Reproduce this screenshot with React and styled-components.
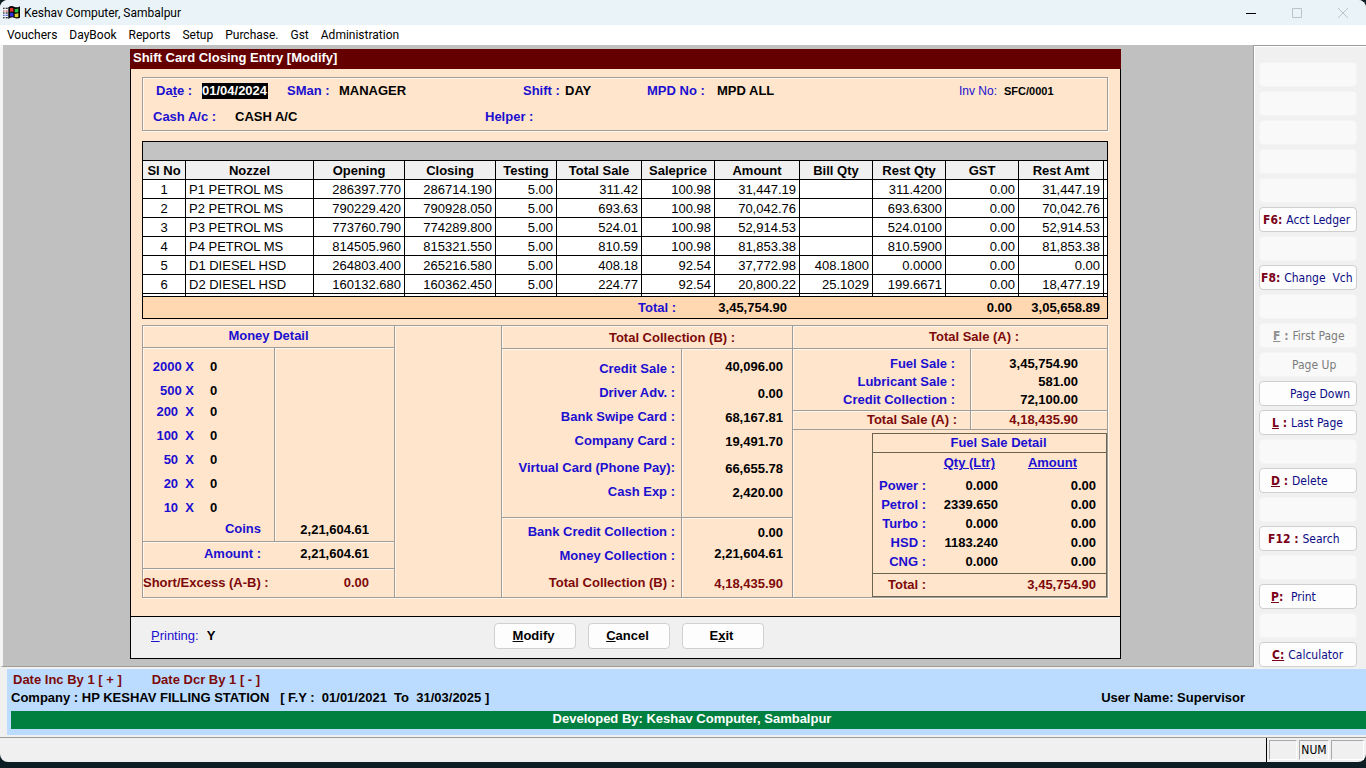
import React, { useState } from "react";
import styled, { createGlobalStyle, css } from "styled-components";

const GlobalStyle = createGlobalStyle`
  * {
    box-sizing: border-box;
  }
  :root {
    --blue: #1b0fd0;
    --maroon: #7d0a0a;
    --peach: #ffe5cc;
    --line: #a09c98;
    --face: #f0f0f0;
    --arial: "Liberation Sans", Arial, sans-serif;
    --segoe: Roboto, "Segoe UI", sans-serif;
    --tahoma: "DejaVu Sans Condensed", Tahoma, sans-serif;
  }
  body {
    margin: 0;
    background: #0d1f24;
    font: bold 13px/16px var(--arial);
    color: #000;
  }
`;

const Window = styled.div`
  display: flex;
  flex-direction: column;
  min-height: calc(100vh - 6px);
  border-radius: 8px;
  overflow: hidden;
  background: var(--face);
`;

const TitleBar = styled.header`
  display: flex;
  align-items: center;
  height: 25px;
  padding-left: 3px;
  background: #eaf4f8;
  font: 12px/16px var(--segoe);
  svg {
    flex: none;
  }
  h1 {
    flex: 1;
    margin: 0 0 0 4px;
    font: inherit;
  }
`;

const CaptionButton = styled.button`
  display: flex;
  align-items: center;
  justify-content: center;
  width: 46px;
  height: 25px;
  padding: 0;
  border: none;
  background: none;
  color: ${({ disabled }) => (disabled ? "#b9c4c4" : "#000")};
`;

const MenuBar = styled.nav`
  display: flex;
  align-items: center;
  gap: 12px;
  height: 20px;
  padding-left: 7px;
  background: #fff;
  font: 12px/16px var(--segoe);
  button {
    padding: 0;
    border: none;
    background: none;
    font: inherit;
    color: inherit;
  }
`;

const Workspace = styled.div`
  display: flex;
  flex: 1;
  border-left: 3px solid #f4f4f4;
  border-bottom: 1px solid var(--line);
  background: #c0c0c0;
`;

const Desk = styled.main`
  flex: 1;
  min-width: 0;
  padding: 4px 132px 7px 127px;
`;

const Form = styled.form`
  display: flex;
  flex-direction: column;
  border: 1px solid #000;
  background: var(--peach);
`;

const FormTitle = styled.h2`
  height: 20px;
  margin: -1px -1px 0;
  padding: 1px 3px;
  background: #640000;
  color: #fff;
  font: inherit;
`;

const FormBody = styled.div`
  padding: 8px 12px 18px 11px;
`;

const etched = css`
  border: 1px solid var(--line);
  box-shadow: 1px 1px 0 #fff6ee, inset 1px 1px 0 #fff6ee;
`;

const EntryHead = styled.section`
  ${etched}
  height: 54px;
  padding: 5px 0 0 10px;
`;

const EntryRow = styled.div`
  display: grid;
  grid-template-columns: ${({ $cols }) => $cols};
  align-items: center;
  height: 16px;
  margin-bottom: 10px;
  padding-left: ${({ $indent }) => $indent || 0}px;
`;

const Field = styled.label`
  display: flex;
  align-items: center;
  color: var(--blue);
  white-space: nowrap;
  span {
    flex: none;
    width: ${({ $label }) => $label}px;
  }
  font-weight: ${({ $plain }) => ($plain ? "normal" : "bold")};
  font-size: ${({ $plain }) => ($plain ? 12 : 13)}px;
`;

const FieldInput = styled.input`
  width: ${({ $width }) => $width || 120}px;
  min-width: 0;
  height: 16px;
  padding: 0;
  border: none;
  outline: none;
  background: ${({ $selected }) => ($selected ? "#000" : "transparent")};
  color: ${({ $selected }) => ($selected ? "#fff" : "#000")};
  font: bold ${({ $small }) => ($small ? 11 : 13)}px/16px var(--arial);
`;

const GridBox = styled.section`
  margin-top: 10px;
  padding-top: 18px;
  border: 1px solid #000;
  background: #c3c3c3;
`;

const NozzleTable = styled.table`
  width: 100%;
  table-layout: fixed;
  border-collapse: separate;
  border-spacing: 0;
  border-top: 1px solid #000;
  background: #fff;
  th,
  td {
    height: 19px;
    padding: 1px 3px 0;
    border-right: 1px solid #000;
    border-bottom: 1px solid #000;
    line-height: 16px;
    white-space: nowrap;
  }
  th {
    padding: 1px 0 0;
    background: var(--face);
  }
  tbody td {
    font-weight: normal;
    text-align: right;
  }
  tbody td:nth-child(1) {
    text-align: center;
  }
  tbody td:nth-child(2) {
    text-align: left;
  }
  th:last-child,
  td:last-child {
    padding: 0;
    border-right: none;
  }
  tbody tr:last-child td {
    height: 3px;
    padding: 0;
    line-height: 0;
  }
  tfoot td {
    height: 21px;
    padding: 0;
    border: none;
    background: #ffd8b2;
    text-align: right;
  }
`;

const TotalLabel = styled.td`
  && {
    padding-right: 39px;
    color: var(--blue);
  }
`;

const TotalAmount = styled.td`
  && {
    padding-right: ${({ $right }) => $right}px;
  }
`;

const Panels = styled.section`
  ${etched}
  display: grid;
  grid-template-columns:
    minmax(0, 252fr) minmax(0, 107fr)
    minmax(0, 291fr) minmax(0, 314fr);
  margin-top: 6px;
  > div {
    display: flex;
    flex-direction: column;
    border-right: 1px solid var(--line);
    box-shadow: 1px 0 0 #fff6ee;
  }
  > div:last-child {
    border-right: none;
    box-shadow: none;
  }
`;

const PanelTitle = styled.h3`
  height: ${({ $height }) => $height}px;
  margin: 0;
  padding-top: ${({ $top }) => $top || 3}px;
  padding-left: ${({ $shift }) => $shift || 0}px;
  border-bottom: 1px solid ${({ $line }) => $line || "var(--line)"};
  color: ${({ $color }) => $color};
  font: inherit;
  text-align: center;
`;

/* two columns split by a rule, rows placed by track heights */
const Split = styled.div`
  display: grid;
  grid-template-columns: ${({ $cols }) => $cols};
  height: ${({ $height }) => $height}px;
  border-bottom: ${({ $last }) => ($last ? "none" : "1px solid var(--line)")};
  box-shadow: inset 0 1px 0 #fff6ee;
  color: ${({ $tone }) => $tone || "#000"};
`;

const Side = styled.div`
  display: grid;
  grid-template-rows: ${({ $rows }) => $rows};
  align-content: start;
  padding: ${({ $top }) => $top}px ${({ $right }) => $right}px 0 0;
  border-right: ${({ $rule }) => ($rule ? "1px solid var(--line)" : "none")};
  box-shadow: ${({ $rule }) => ($rule ? "1px 0 0 #fff6ee" : "none")};
  color: ${({ $color }) => $color || "inherit"};
  text-align: right;
  white-space: pre;
`;

const Maroon = styled.span`
  color: var(--maroon);
`;

const Note = styled.div`
  display: grid;
  grid-template-columns: 51px 1fr;
  column-gap: 16px;
  text-align: right;
  span:last-child {
    color: #000;
    text-align: left;
  }
`;

const FuelBox = styled.div`
  flex: 1;
  margin: 3px 0 0 79px;
  border: 1px solid #6b6450;
`;

const FuelTable = styled.table`
  width: 100%;
  table-layout: fixed;
  border-collapse: separate;
  border-spacing: 0;
  th,
  td {
    height: 19px;
    padding: 0;
    vertical-align: top;
    text-align: right;
    white-space: nowrap;
  }
  thead th {
    height: 25px;
    padding-top: 2px;
    color: var(--blue);
    text-decoration: underline;
  }
  tbody th {
    color: var(--blue);
  }
  td:last-child {
    padding-right: 10px;
  }
  thead th:nth-child(2) {
    padding-right: 3px;
  }
  thead th:last-child {
    padding-right: 29px;
  }
  tfoot th,
  tfoot td {
    height: 22px;
    padding-top: 3px;
    border-top: 1px solid #6b6450;
    color: var(--maroon);
  }
`;

const FormFoot = styled.footer`
  display: grid;
  grid-template-columns: 1fr auto 1fr;
  align-items: center;
  height: 42px;
  padding: 0 0 3px 6px;
  border-top: 1px solid #000;
  background: var(--face);
  label {
    padding-left: 14px;
    color: var(--blue);
    font-weight: normal;
  }
  input {
    margin-left: 8px;
  }
`;

const Actions = styled.div`
  display: flex;
  gap: 12px;
`;

const ActionButton = styled.button`
  width: 82px;
  height: 26px;
  padding: 0 2px 0 0;
  border: 1px solid #d0d0d0;
  border-radius: 4px;
  background: #fdfdfd;
  color: #000;
  font: inherit;
`;

const SideBar = styled.aside`
  display: flex;
  flex-direction: column;
  gap: 4px;
  width: 113px;
  margin-bottom: -1px;
  padding: 16px 9px 0 5px;
  border-top: 1px solid var(--line);
  border-left: 1px solid var(--line);
  box-shadow: inset 1px 1px 0 #fff;
  background: var(--face);
`;

const SideButton = styled.button`
  display: flex;
  align-items: center;
  gap: 4px;
  height: 25px;
  padding: 0 0 0 ${({ $indent }) => $indent || 0}px;
  border: 1px solid ${({ disabled }) => (disabled ? "#f4f4f4" : "#cfcfcf")};
  border-radius: 4px;
  background: ${({ disabled }) => (disabled ? "#f9f9f9" : "#fdfdfd")};
  color: ${({ disabled }) => (disabled ? "#7c7c7c" : "#0b0b85")};
  font: 12px/16px var(--tahoma);
  white-space: pre;
  b {
    color: ${({ disabled }) => (disabled ? "#8f8f8f" : "#7a0018")};
  }
`;

const InfoBand = styled.section`
  display: flex;
  flex-direction: column;
  margin-top: 2px;
  margin-left: 7px;
  padding: 3px 0 6px 4px;
  background: #bbdcff;
`;

const InfoLine = styled.div`
  display: flex;
  justify-content: space-between;
  height: 18px;
  padding-right: 121px;
  color: ${({ $color }) => $color || "#000"};
  white-space: pre;
`;

const Shortcuts = styled.div`
  display: flex;
  gap: 30px;
  padding-left: 2px;
`;

const Credit = styled.div`
  height: 18px;
  margin-top: 3px;
  padding-left: 7px;
  background: #008040;
  color: #fff;
  text-align: center;
`;

const StatusBar = styled.footer`
  display: flex;
  gap: 2px;
  height: 25px;
  margin-top: 2px;
  padding-right: 2px;
  border-top: 1px solid var(--line);
`;

const StatusText = styled.div`
  flex: 1;
  border-right: 1px solid #000;
`;

const StatusCell = styled.div`
  width: ${({ $width }) => $width}px;
  margin: 2px 0;
  border: 1px solid;
  border-color: #a8a8a8 #fff #fff #a8a8a8;
  font: 12px/18px var(--tahoma);
  text-align: center;
`;

const columns = [
  ["Sl No", 43],
  ["Nozzel"],
  ["Opening", 91],
  ["Closing", 91],
  ["Testing", 61],
  ["Total Sale", 85],
  ["Saleprice", 73],
  ["Amount", 85],
  ["Bill Qty", 73],
  ["Rest Qty", 73],
  ["GST", 73],
  ["Rest Amt", 85],
  ["", 3],
];

const nozzles = [
  ["P1 PETROL MS", "286397.770", "286714.190", "5.00", "311.42", "100.98", "31,447.19", "", "311.4200", "0.00", "31,447.19"],
  ["P2 PETROL MS", "790229.420", "790928.050", "5.00", "693.63", "100.98", "70,042.76", "", "693.6300", "0.00", "70,042.76"],
  ["P3 PETROL MS", "773760.790", "774289.800", "5.00", "524.01", "100.98", "52,914.53", "", "524.0100", "0.00", "52,914.53"],
  ["P4 PETROL MS", "814505.960", "815321.550", "5.00", "810.59", "100.98", "81,853.38", "", "810.5900", "0.00", "81,853.38"],
  ["D1 DIESEL HSD", "264803.400", "265216.580", "5.00", "408.18", "92.54", "37,772.98", "408.1800", "0.0000", "0.00", "0.00"],
  ["D2 DIESEL HSD", "160132.680", "160362.450", "5.00", "224.77", "92.54", "20,800.22", "25.1029", "199.6671", "0.00", "18,477.19"],
];

const notes = ["2000 X", "500 X", "200  X", "100  X", "50  X", "20  X", "10  X"];

const collection = [
  ["Credit Sale :", "40,096.00"],
  ["Driver Adv. :", "0.00"],
  ["Bank Swipe Card :", "68,167.81"],
  ["Company Card :", "19,491.70"],
  ["Virtual Card (Phone Pay):", "66,655.78"],
  ["Cash Exp :", "2,420.00"],
];

const sales = [
  ["Fuel Sale :", "3,45,754.90"],
  ["Lubricant Sale :", "581.00"],
  ["Credit Collection :", "72,100.00"],
];

const fuels = [
  ["Power :", "0.000"],
  ["Petrol :", "2339.650"],
  ["Turbo :", "0.000"],
  ["HSD :", "1183.240"],
  ["CNG :", "0.000"],
];

const blank = { disabled: true };
const sideButtons = [
  blank,
  blank,
  blank,
  blank,
  blank,
  { hot: "F6:", text: "Acct Ledger", indent: 3 },
  blank,
  { hot: "F8:", text: "Change  Vch", indent: 1 },
  blank,
  { hot: <><u>F</u> :</>, text: "First Page", indent: 13, disabled: true },
  { text: "Page Up", indent: 32, disabled: true },
  { text: "Page Down", indent: 30 },
  { hot: <><u>L</u> :</>, text: "Last Page", indent: 12 },
  blank,
  { hot: <><u>D</u> :</>, text: "Delete", indent: 11 },
  blank,
  { hot: "F12 :", text: "Search", indent: 8 },
  blank,
  { hot: <><u>P</u>: </>, text: "Print", indent: 11 },
  blank,
  { hot: <u>C:</u>, text: "Calculator", indent: 12 },
];

const collectionCols = "minmax(0, 180fr) minmax(0, 110fr)";
const saleCols = "minmax(0, 178fr) minmax(0, 136fr)";
const moneyCols = "minmax(0, 132fr) minmax(0, 119fr)";

function AppIcon() {
  return (
    <svg width="17" height="15" viewBox="0 0 16 14" aria-hidden="true">
      <path d="M5 2 Q8 0 10.500 1.500 T16 1 V12 Q13 13.500 10.500 12 T5 13Z" fill="#000" />
      <path d="M6.500 3 Q8 2 9.800 3 V6.500 Q8 5.500 6.500 6.500Z" fill="#e03030" />
      <path d="M11 3.500 Q13 4 14.500 3 V6.500 Q13 7.500 11 6.800Z" fill="#30c040" />
      <path d="M6.500 7.500 Q8 6.500 9.800 7.500 V11 Q8 10 6.500 11Z" fill="#3030e0" />
      <path d="M11 8 Q13 8.500 14.500 7.500 V11 Q13 12 11 11.200Z" fill="#e0d030" />
      <path d="M0 3h1.500M2.500 3h2M0 12h1.500M2.500 12h2" stroke="#000" />
      <path d="M0 5.500h1.500M2.500 5.500h2" stroke="#d03030" />
      <path d="M0 9.500h1.500M2.500 9.500h2" stroke="#3030d0" />
      <path d="M0 7.500h1.500M2.500 7.500h2" stroke="#000" />
    </svg>
  );
}

function Caption({ label, d, disabled }) {
  return (
    <CaptionButton type="button" aria-label={label} disabled={disabled}>
      <svg width="12" height="12" viewBox="0 0 12 12" fill="none" stroke="currentColor">
        <path d={d} />
      </svg>
    </CaptionButton>
  );
}

function EntryField({ label, value, labelWidth, plain, ...rest }) {
  const [text, setText] = useState(value);
  return (
    <Field $label={labelWidth} $plain={plain}>
      <span>{label}</span>
      <FieldInput value={text} onChange={(e) => setText(e.target.value)} {...rest} />
    </Field>
  );
}

function NozzleGrid() {
  return (
    <GridBox>
      <NozzleTable>
        <colgroup>
          {columns.map(([name, width]) => (
            <col key={name} width={width} />
          ))}
        </colgroup>
        <thead>
          <tr>
            {columns.map(([name]) => (
              <th key={name}>{name}</th>
            ))}
          </tr>
        </thead>
        <tbody>
          {nozzles.map((row, i) => (
            <tr key={row[0]}>
              <td>{i + 1}</td>
              {row.map((cell, j) => (
                <td key={j}>{cell}</td>
              ))}
              <td />
            </tr>
          ))}
          <tr>
            {columns.map(([name]) => (
              <td key={name} />
            ))}
          </tr>
        </tbody>
        <tfoot>
          <tr>
            <TotalLabel colSpan={7}>Total :</TotalLabel>
            <TotalAmount $right={13}>3,45,754.90</TotalAmount>
            <td colSpan={2} />
            <TotalAmount $right={7}>0.00</TotalAmount>
            <TotalAmount $right={4}>3,05,658.89</TotalAmount>
            <td />
          </tr>
        </tfoot>
      </NozzleTable>
    </GridBox>
  );
}

function MoneyDetail() {
  return (
    <div>
      <PanelTitle $height={22} $top={2} $color="var(--blue)">
        Money Detail
      </PanelTitle>
      <Split $cols={moneyCols} $height={194}>
        <Side $rule $top={11} $right={13} $color="var(--blue)" $rows="24px 21px 24px 24px 24px 24px 21px 16px">
          {notes.map((note) => (
            <Note key={note}>
              <span>{note}</span>
              <span>0</span>
            </Note>
          ))}
          <span>Coins</span>
        </Side>
        <Side $top={174} $right={25}>
          <span>2,21,604.61</span>
        </Side>
      </Split>
      <Split $cols={moneyCols} $height={27}>
        <Side $top={4} $right={14} $color="var(--blue)">
          Amount :
        </Side>
        <Side $top={4} $right={25}>
          2,21,604.61
        </Side>
      </Split>
      <Split $cols={moneyCols} $height={28} $last $tone="var(--maroon)">
        <Side $top={6} $right={9}>
          Short/Excess (A-B) :
        </Side>
        <Side $top={6} $right={25}>
          0.00
        </Side>
      </Split>
    </div>
  );
}

function Collection() {
  return (
    <div>
      <PanelTitle $height={23} $top={4} $shift={50} $color="var(--maroon)">
        Total Collection (B) :
      </PanelTitle>
      <Split $cols={collectionCols} $height={169}>
        <Side $rule $top={12} $right={6} $color="var(--blue)" $rows="24px 24px 24px 27px 24px 16px">
          {collection.map(([label]) => (
            <span key={label}>{label}</span>
          ))}
        </Side>
        <Side $top={10} $right={9} $rows="27px 24px 24px 27px 24px 16px">
          {collection.map(([label, value]) => (
            <span key={label}>{value}</span>
          ))}
        </Side>
      </Split>
      <Split $cols={collectionCols} $height={79} $last>
        <Side $rule $top={6} $right={6} $color="var(--blue)" $rows="24px 27px 16px">
          <span>Bank Credit Collection :</span>
          <span>Money Collection :</span>
          <Maroon>Total Collection (B) :</Maroon>
        </Side>
        <Side $top={7} $right={9} $rows="21px 30px 16px">
          <span>0.00</span>
          <span>2,21,604.61</span>
          <Maroon>4,18,435.90</Maroon>
        </Side>
      </Split>
    </div>
  );
}

function FuelDetail() {
  return (
    <FuelBox>
      <PanelTitle $height={19} $top={1} $shift={18} $color="var(--blue)" $line="#6b6450">
        Fuel Sale Detail
      </PanelTitle>
      <FuelTable>
        <colgroup>
          <col width="53" />
          <col width="72" />
          <col />
        </colgroup>
        <thead>
          <tr>
            <th />
            <th>Qty (Ltr)</th>
            <th>Amount</th>
          </tr>
        </thead>
        <tbody>
          {fuels.map(([name, qty]) => (
            <tr key={name}>
              <th>{name}</th>
              <td>{qty}</td>
              <td>0.00</td>
            </tr>
          ))}
        </tbody>
        <tfoot>
          <tr>
            <th>Total :</th>
            <td />
            <td>3,45,754.90</td>
          </tr>
        </tfoot>
      </FuelTable>
    </FuelBox>
  );
}

function Sales() {
  return (
    <div>
      <PanelTitle $height={23} $shift={48} $color="var(--maroon)">
        Total Sale (A) :
      </PanelTitle>
      <Split $cols={saleCols} $height={62}>
        <Side $rule $top={7} $right={15} $color="var(--blue)" $rows="18px 18px 16px">
          {sales.map(([label]) => (
            <span key={label}>{label}</span>
          ))}
        </Side>
        <Side $top={7} $right={29} $rows="18px 18px 16px">
          {sales.map(([label, value]) => (
            <span key={label}>{value}</span>
          ))}
        </Side>
      </Split>
      <Split $cols={saleCols} $height={19} $tone="var(--maroon)">
        <Side $rule $top={1} $right={13}>
          Total Sale (A) :
        </Side>
        <Side $top={1} $right={29}>
          4,18,435.90
        </Side>
      </Split>
      <FuelDetail />
    </div>
  );
}

export default function App() {
  const [printing, setPrinting] = useState("Y");
  return (
    <>
      <GlobalStyle />
      <Window>
        <TitleBar>
          <AppIcon />
          <h1>Keshav Computer, Sambalpur</h1>
          <Caption label="Minimize" d="M1 6.500h10" />
          <Caption label="Maximize" disabled d="M1.500 1.500h9v9h-9z" />
          <Caption label="Close" disabled d="M1 1l10 10M11 1L1 11" />
        </TitleBar>
        <MenuBar>
          {["Vouchers", "DayBook", "Reports", "Setup", "Purchase.", "Gst", "Administration"].map((item) => (
            <button type="button" key={item}>
              {item}
            </button>
          ))}
        </MenuBar>
        <Workspace>
          <Desk>
            <Form onSubmit={(e) => e.preventDefault()}>
              <FormTitle>Shift Card Closing Entry [Modify]</FormTitle>
              <FormBody>
                <EntryHead>
                  <EntryRow $indent={3} $cols="131fr 236fr 124fr 312fr 148fr">
                    <EntryField label={<>Da<u>t</u>e :</>} value="01/04/2024" labelWidth={46} $width={66} $selected />
                    <EntryField label="SMan :" value="MANAGER" labelWidth={52} />
                    <EntryField label="Shift :" value="DAY" labelWidth={42} $width={60} />
                    <EntryField label="MPD No :" value="MPD ALL" labelWidth={70} />
                    <EntryField label="Inv No:" value="SFC/0001" labelWidth={45} $width={80} plain $small />
                  </EntryRow>
                  <EntryRow $cols="332fr 622fr">
                    <EntryField label="Cash A/c :" value="CASH A/C" labelWidth={82} />
                    <EntryField label="Helper :" value="" labelWidth={60} />
                  </EntryRow>
                </EntryHead>
                <NozzleGrid />
                <Panels>
                  <MoneyDetail />
                  <div />
                  <Collection />
                  <Sales />
                </Panels>
              </FormBody>
              <FormFoot>
                <label>
                  <u>P</u>rinting:
                  <FieldInput $width={20} value={printing} onChange={(e) => setPrinting(e.target.value)} />
                </label>
                <Actions>
                  <ActionButton type="submit">
                    <u>M</u>odify
                  </ActionButton>
                  <ActionButton type="button">
                    <u>C</u>ancel
                  </ActionButton>
                  <ActionButton type="button">
                    E<u>x</u>it
                  </ActionButton>
                </Actions>
              </FormFoot>
            </Form>
          </Desk>
          <SideBar>
            {sideButtons.map(({ hot, text, indent, disabled }, i) => (
              <SideButton type="button" key={i} $indent={indent} disabled={disabled}>
                {hot && <b>{hot}</b>}
                {text}
              </SideButton>
            ))}
          </SideBar>
        </Workspace>
        <InfoBand>
          <InfoLine $color="var(--maroon)">
            <Shortcuts>
              <span>Date Inc By 1 [ + ]</span>
              <span>Date Dcr By 1 [ - ]</span>
            </Shortcuts>
          </InfoLine>
          <InfoLine>
            <span>{"Company : HP KESHAV FILLING STATION   [ F.Y :  01/01/2021  To  31/03/2025 ]"}</span>
            <span>User Name: Supervisor</span>
          </InfoLine>
          <Credit>Developed By: Keshav Computer, Sambalpur</Credit>
        </InfoBand>
        <StatusBar>
          <StatusText />
          <StatusCell $width={28} />
          <StatusCell $width={30}>NUM</StatusCell>
          <StatusCell $width={33} />
        </StatusBar>
      </Window>
    </>
  );
}
